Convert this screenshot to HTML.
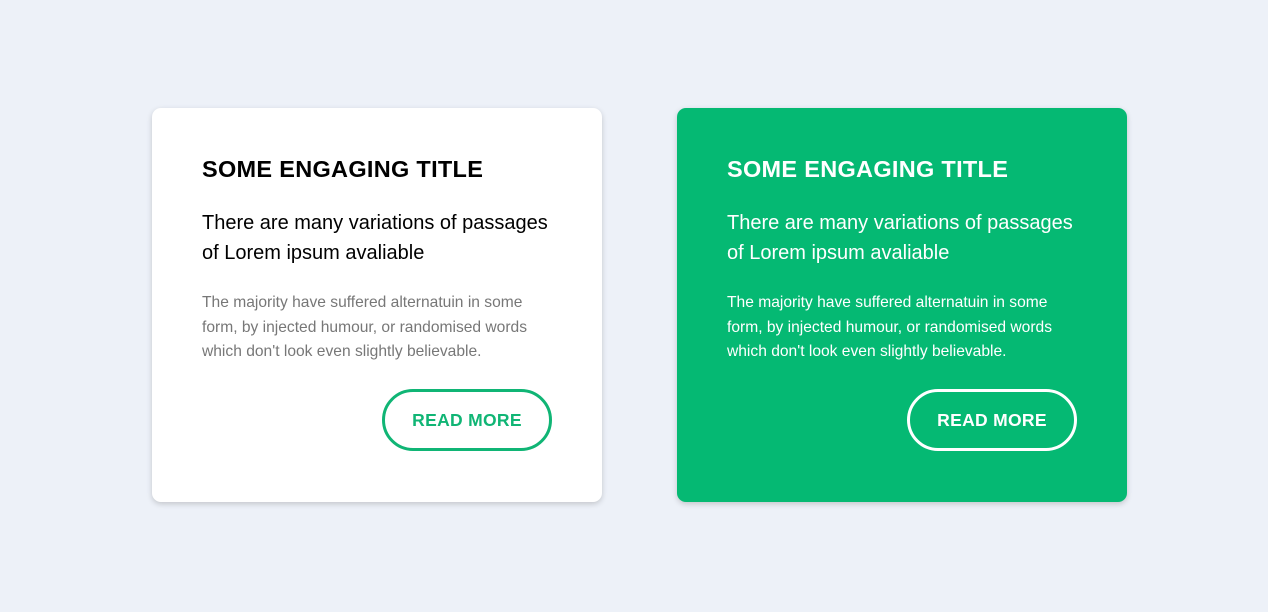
<!DOCTYPE html>
<html><head><style>
body{margin:0;width:1268px;height:612px;background:#edf1f8;font-family:"Liberation Sans",Arial,sans-serif;position:relative;overflow:hidden}
.card{position:absolute;top:108px;width:350px;height:294px;padding:50px;border-radius:9px;background:#fff;box-shadow:0 2px 6px rgba(0,0,0,.18)}
.c1{left:152px}.c2{left:677px;background:#05b973;color:#fff}
h2{margin:0;font-size:23.5px;font-weight:bold;position:absolute;top:48px;left:50px;letter-spacing:.3px;line-height:26px}
.sub{position:absolute;left:50px;top:100px;font-size:20px;line-height:30px;margin:0}
.p{position:absolute;left:50px;top:183px;font-size:15.6px;line-height:24.5px;margin:0;color:#777;width:360px}
.c2 .p{color:#fff}
.btn{position:absolute;left:230px;top:281px;width:164px;height:56px;border:3px solid #10b575;border-radius:32px;color:#10b575;font-weight:bold;font-size:17.5px;text-align:center;line-height:56px;letter-spacing:.3px}
.c2 .btn{border-color:#fff;color:#fff}
</style></head><body>
<div class="card c1"><h2>SOME ENGAGING TITLE</h2><p class="sub">There are many variations of passages<br>of Lorem ipsum avaliable</p><p class="p">The majority have suffered alternatuin in some<br>form, by injected humour, or randomised words<br>which don't look even slightly believable.</p><div class="btn">READ MORE</div></div>
<div class="card c2"><h2>SOME ENGAGING TITLE</h2><p class="sub">There are many variations of passages<br>of Lorem ipsum avaliable</p><p class="p">The majority have suffered alternatuin in some<br>form, by injected humour, or randomised words<br>which don't look even slightly believable.</p><div class="btn">READ MORE</div></div>
</body></html>
